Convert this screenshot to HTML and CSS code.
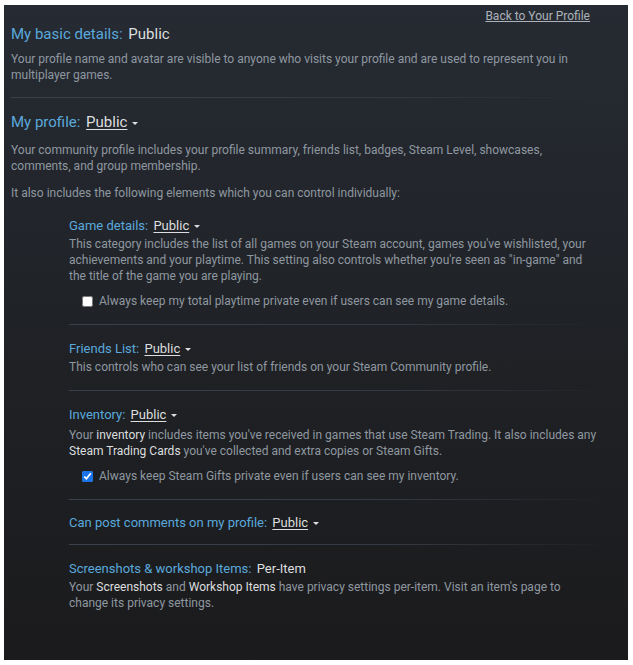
FILE: index.html
```html
<!DOCTYPE html>
<html lang="en">
<head>
<meta charset="utf-8">
<title>Privacy Settings</title>
<link rel="stylesheet" href="styles.css">
</head>
<body>
<div class="page">
  <div class="backlink"><a href="#">Back to Your Profile</a></div>

  <div class="setting">
    <div class="title">My basic details: <span class="value">Public</span></div>
    <div class="desc first">Your profile name and avatar are visible to anyone who visits your profile and are used to represent you in multiplayer games.</div>
  </div>
  <div class="sep"></div>

  <div class="setting">
    <div class="title">My profile: <span class="value dd">Public</span><span class="caret"></span></div>
    <div class="desc second">Your community profile includes your profile summary, friends list, badges, Steam Level, showcases, comments, and group membership.</div>
    <div class="desc also">It also includes the following elements which you can control individually:</div>

    <div class="sublist">
      <div class="sub">
        <div class="subtitle">Game details: <span class="value dd">Public</span><span class="caret"></span></div>
        <div class="subdesc">This category includes the list of all games on your Steam account, games you've wishlisted, your achievements and your playtime. This setting also controls whether you're seen as "in-game" and the title of the game you are playing.</div>
        <label class="check"><input type="checkbox"> Always keep my total playtime private even if users can see my game details.</label>
      </div>
      <div class="sep"></div>

      <div class="sub">
        <div class="subtitle">Friends List: <span class="value dd">Public</span><span class="caret"></span></div>
        <div class="subdesc">This controls who can see your list of friends on your Steam Community profile.</div>
      </div>
      <div class="sep"></div>

      <div class="sub">
        <div class="subtitle">Inventory: <span class="value dd">Public</span><span class="caret"></span></div>
        <div class="subdesc wide">Your <b>inventory</b> includes items you've received in games that use Steam Trading. It also includes any <b>Steam Trading Cards</b> you've collected and extra copies or Steam Gifts.</div>
        <label class="check"><input type="checkbox" checked> Always keep Steam Gifts private even if users can see my inventory.</label>
      </div>
      <div class="sep"></div>

      <div class="sub short">
        <div class="subtitle">Can post comments on my profile: <span class="value dd">Public</span><span class="caret"></span></div>
      </div>
      <div class="sep"></div>

      <div class="sub">
        <div class="subtitle">Screenshots &amp; workshop Items: <span class="value">Per-Item</span></div>
        <div class="subdesc">Your <b>Screenshots</b> and <b>Workshop Items</b> have privacy settings per-item. Visit an item's page to change its privacy settings.</div>
      </div>
    </div>
  </div>
</div>
</body>
</html>
```

FILE: styles.css
```css
body {
    margin: 0;
    background-color: #ffffff;
    font-family: Roboto, "Liberation Sans", sans-serif;
    font-size: 12px;
    line-height: 16px;
    color: #8f98a0;
}
.page {
    margin: 5px 5px 5px 4px;
    width: 624px;
    height: 655px;
    box-sizing: border-box;
    padding: 3px 18px 0 7px;
    background: linear-gradient(to bottom, #262b33 0%, #1f2125 55%, #1b1b1d 100%);
}
.backlink {
    text-align: right;
    padding-right: 20px;
}
.backlink a {
    color: #acb2b8;
    text-decoration: underline;
}
.title {
    font-size: 15px;
    line-height: 20px;
    color: #5aa9dc;
}
.value {
    color: #dcdedf;
    margin-left: 2px;
}
.dd {
    text-decoration: underline;
    text-underline-offset: 2px;
}
.caret {
    display: inline-block;
    margin-left: 5px;
    vertical-align: middle;
    border-left: 3px solid transparent;
    border-right: 3px solid transparent;
    border-top: 3px solid #dcdedf;
}
.desc {
    max-width: 580px;
}
.desc.first {
    margin-top: 7px;
}
.desc.second {
    margin-top: 10px;
}
.desc.also {
    margin-top: 11px;
}
.sep {
    height: 1px;
    margin-top: 14px;
    background: linear-gradient(to right, #3a414b 0%, #343a43 60%, rgba(52, 58, 67, 0) 100%);
}
.setting + .sep + .setting {
    padding-top: 14px;
}
.sublist {
    margin-left: 58px;
    margin-top: 16px;
}
.sub {
    padding-bottom: 1px;
}
.sep + .sub {
    padding-top: 15px;
}
.sub.short {
    padding-top: 14px;
    padding-bottom: 0;
}
.sub.short + .sep {
    margin-top: 12px;
}
.subtitle {
    font-size: 13px;
    line-height: 18px;
    color: #5aa9dc;
}
.subdesc {
    margin-top: 1px;
    max-width: 526px;
}
.subdesc.wide {
    margin-top: 3px;
    max-width: 534px;
}
.subdesc b {
    font-weight: normal;
    color: #dcdedf;
}
.check {
    display: flex;
    align-items: center;
    gap: 6px;
    margin-top: 9px;
    padding-left: 13px;
}
.check input {
    margin: 0;
    width: 11px;
    height: 11px;
    accent-color: #1a73e8;
}
```
